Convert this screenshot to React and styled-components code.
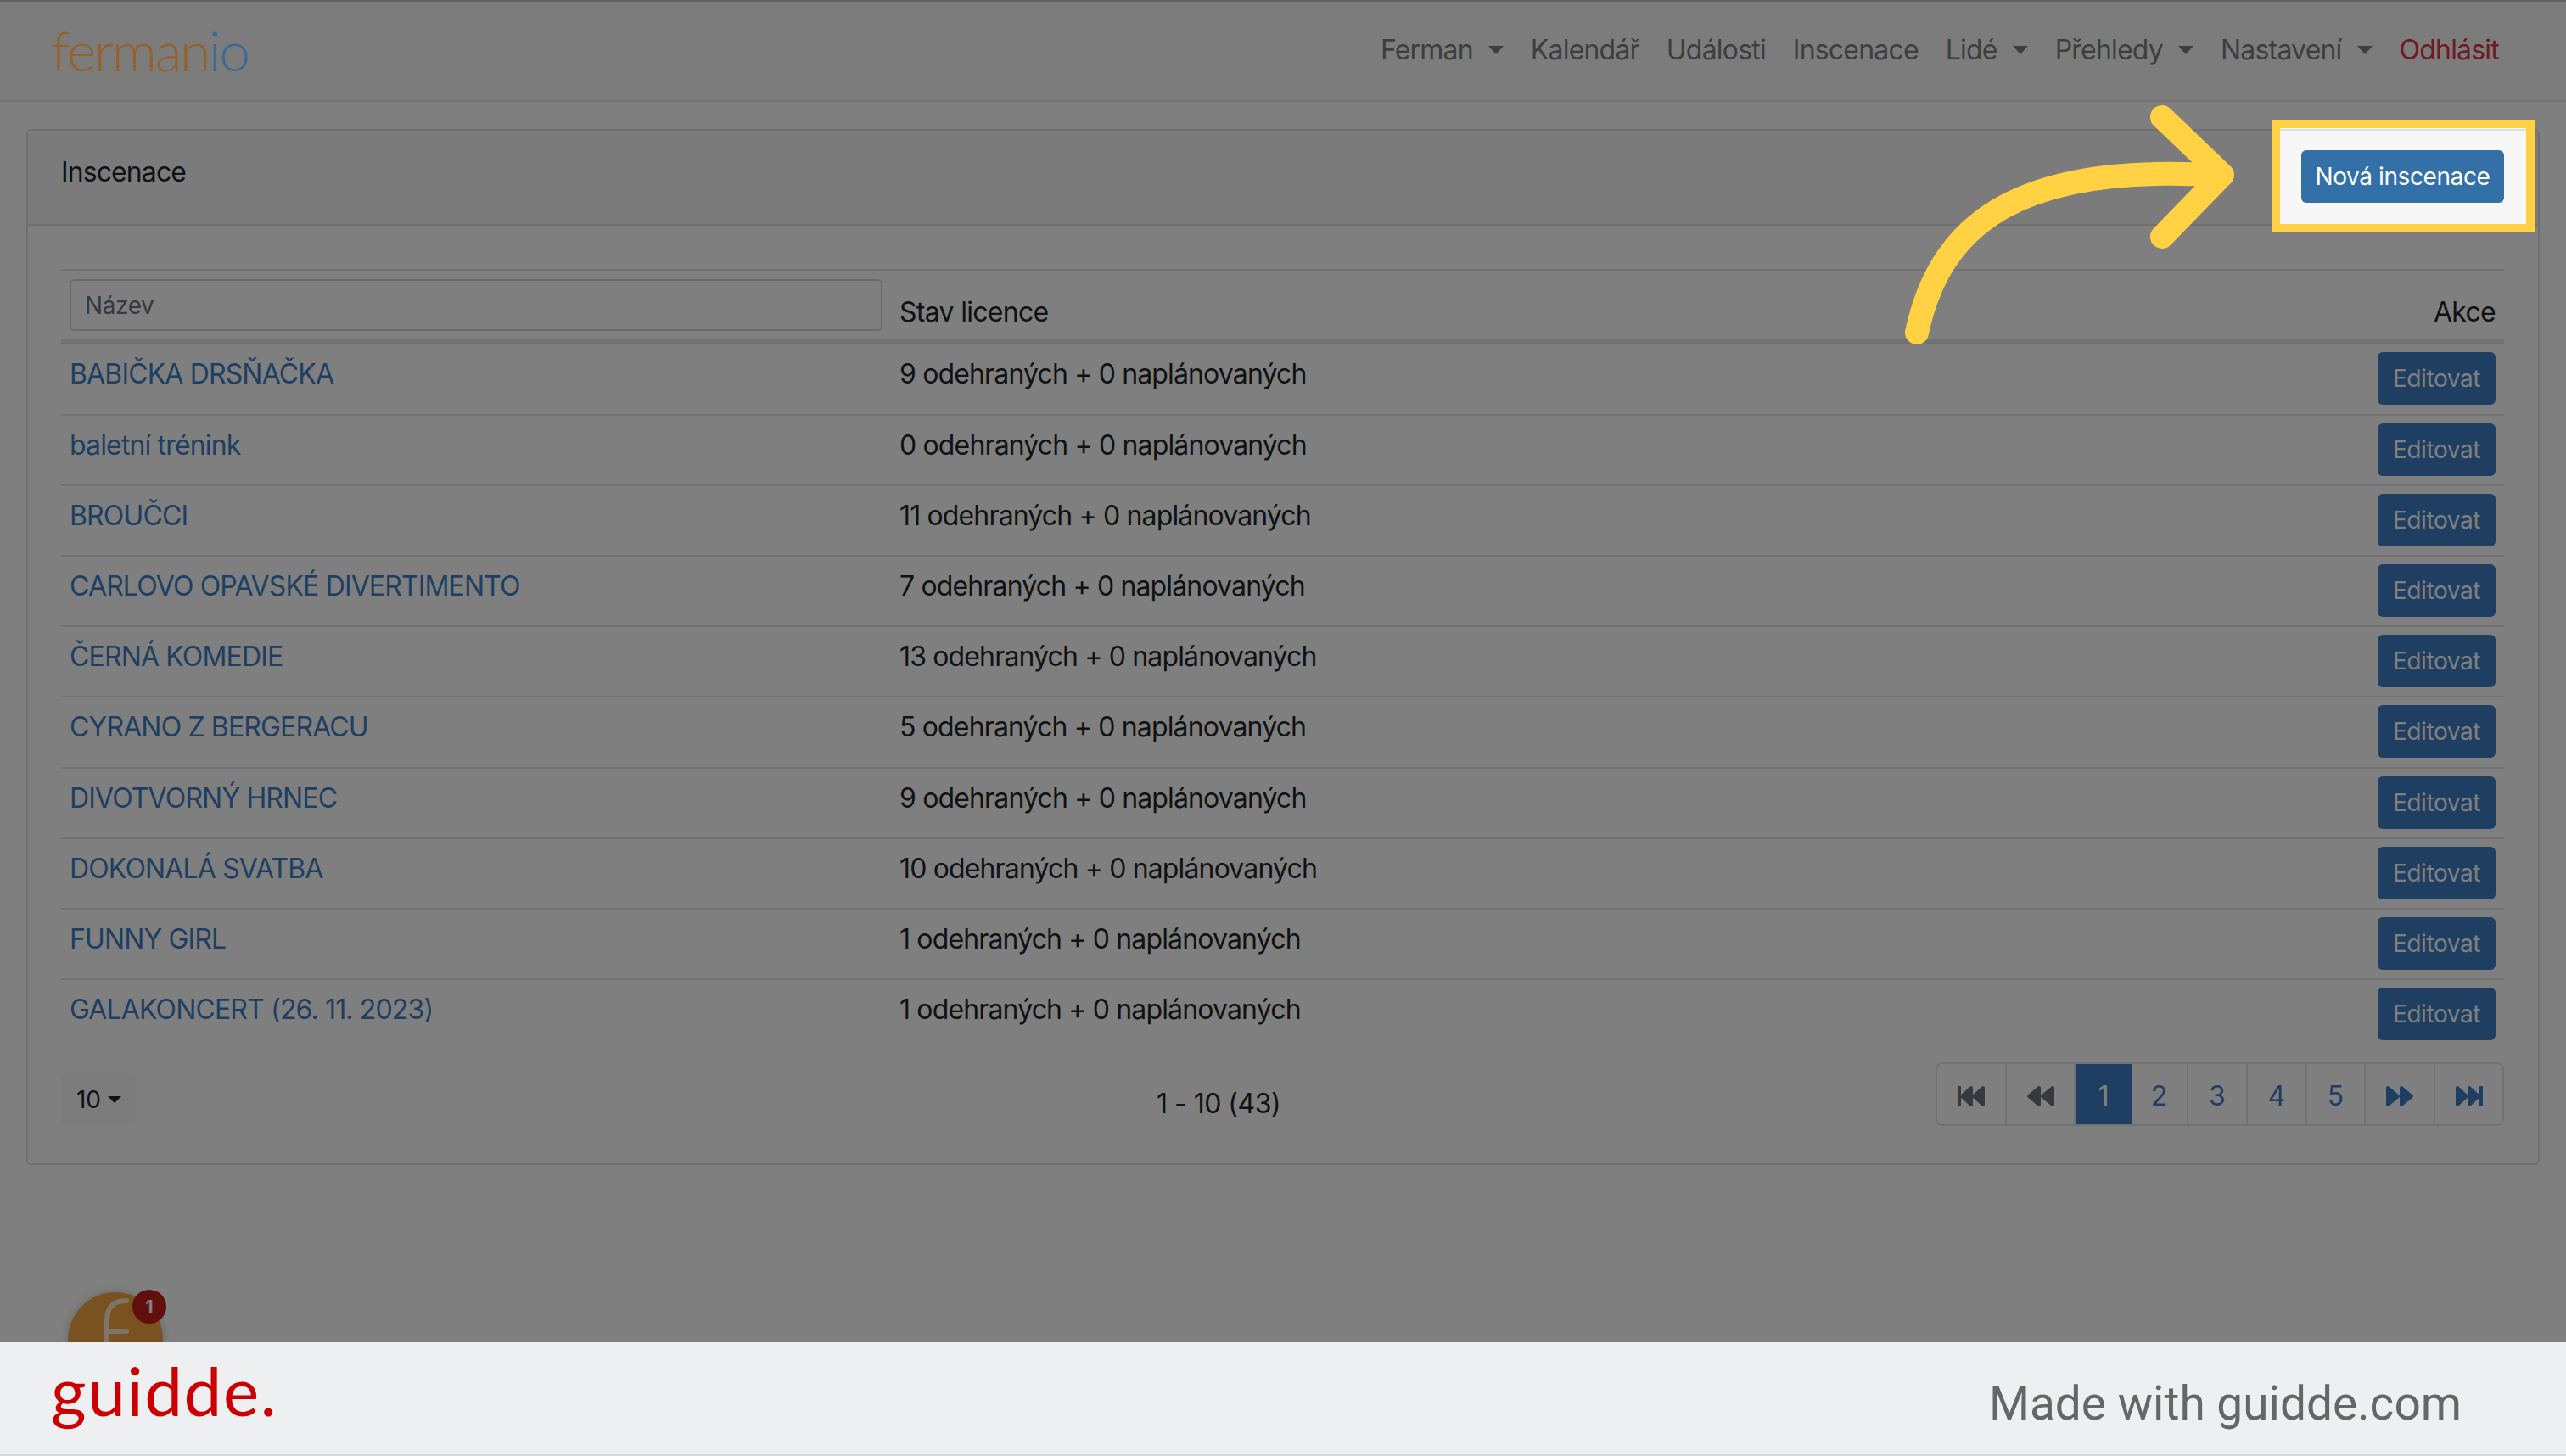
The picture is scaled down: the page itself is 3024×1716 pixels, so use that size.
import styled, { createGlobalStyle } from "styled-components";
import { FaFastBackward, FaBackward, FaForward, FaFastForward } from "react-icons/fa";

const GlobalStyle = createGlobalStyle`
  html, body {
    margin: 0;
    padding: 0;
    background: #fff;
  }
  body {
    font-family: Inter, "Liberation Sans", sans-serif;
    font-size: 32px;
    line-height: 48px;
    color: #212529;
  }
  * {
    box-sizing: border-box;
  }
`;

const blue = "#3e7ec4";

const Page = styled.div`
  width: 3024px;
  height: 1716px;
  display: flex;
  flex-direction: column;
  overflow: hidden;
`;

const Main = styled.main`
  position: relative;
  flex: 1;
  overflow: hidden;
`;

const Navbar = styled.nav`
  height: 120px;
  display: flex;
  align-items: center;
  justify-content: space-between;
  padding: 0 79px 2px 60px;
  background: #f8f9fa;
  border-top: 2px solid #c0c0c0;
  border-bottom: 2px solid #e7e7e7;
`;

// sits above the dimming layer so the thin strokes keep their colour
const Logo = styled.div`
  position: relative;
  z-index: 1;
  font-family: Lato, sans-serif;
  font-weight: 300;
  font-size: 66px;
  line-height: 72px;
  letter-spacing: -2.4px;
  color: #96612a;
  span {
    color: #3c6a96;
  }
`;

const NavLinks = styled.div`
  display: flex;
  gap: 32px;
`;

const NavLink = styled.a`
  display: flex;
  align-items: center;
  letter-spacing: -0.8px;
  color: ${(p) => (p.$danger ? "#dc3545" : "#7b7c7d")};
`;

const Caret = styled.i`
  display: inline-block;
  margin-left: 18px;
  border-top: 10px solid ${(p) => p.$color || "#7b7c7d"};
  border-left: 9px solid transparent;
  border-right: 9px solid transparent;
`;

const Content = styled.div`
  padding: 32px 31px 0;
`;

const Card = styled.section`
  border: 2px solid #dfdfdf;
  border-radius: 6px;
  height: 1221px;
`;

const CardHeader = styled.header`
  height: 112px;
  display: flex;
  align-items: flex-start;
  justify-content: space-between;
  padding: 23px 40px 0 39px;
  background: #f7f7f7;
  border-bottom: 2px solid #dfdfdf;
  border-radius: 4px 4px 0 0;
`;

const Title = styled.div`
  line-height: 52px;
  letter-spacing: -0.9px;
`;

const PrimaryButton = styled.button`
  height: 62px;
  width: 239px;
  padding: 0;
  border: 0;
  border-radius: 6px;
  background: #3470a8;
  color: #fff;
  font-family: inherit;
  font-size: 28px;
  letter-spacing: -0.4px;
`;

const CardBody = styled.div`
  padding: 51px 40px 0 39px;
`;

const Table = styled.table`
  width: 2879px;
  table-layout: fixed;
  border-collapse: separate;
  border-spacing: 0;
`;

const Th = styled.th`
  height: 89.4px;
  padding: 0 10px 8px;
  font-weight: 400;
  text-align: ${(p) => (p.$right ? "right" : "left")};
  vertical-align: bottom;
  letter-spacing: -0.7px;
  border-top: 2px solid #dee2e6;
  border-bottom: 6px solid #dee2e6;
`;

const Td = styled.td`
  height: 83.2px;
  padding: 9px 10px 0;
  vertical-align: top;
  line-height: 51px;
  letter-spacing: -0.85px;
  text-align: ${(p) => (p.$right ? "right" : "left")};
  border-bottom: ${(p) => (p.$last ? "0" : "2px solid #dee2e6")};
`;

const FilterInput = styled.input`
  display: block;
  width: 958px;
  height: 61px;
  margin-bottom: 2px;
  padding: 0 16px;
  border: 2px solid #ced4da;
  border-radius: 6px;
  background: #fff;
  font-family: inherit;
  font-size: 28px;
  letter-spacing: -0.4px;
  &::placeholder {
    color: #6c757d;
    opacity: 1;
  }
`;

const RowLink = styled.a`
  color: ${blue};
`;

const EditButton = styled.button`
  width: 139px;
  height: 62px;
  padding: 0;
  border: 0;
  border-radius: 6px;
  background: ${blue};
  color: #fff;
  font-family: inherit;
  font-size: 28px;
  letter-spacing: -0.4px;
  vertical-align: top;
`;

const TableFoot = styled.div`
  display: grid;
  grid-template-columns: 1217px 294px 1fr;
  align-items: center;
  margin-top: 14px;
`;

const PageSize = styled.button`
  display: flex;
  align-items: center;
  justify-content: center;
  gap: 8px;
  width: 89px;
  height: 62px;
  margin-top: 12px;
  border: 0;
  border-radius: 6px;
  background: #f8f9fa;
  color: #212529;
  font-family: inherit;
  font-size: 28px;
  padding: 0;
`;

const SmallCaret = styled(Caret)`
  margin: 0;
  border-top-width: 8px;
  border-left-width: 8px;
  border-right-width: 8px;
`;

const Count = styled.div`
  text-align: center;
  letter-spacing: -0.5px;
  padding-top: 22px;
`;

const Pagination = styled.div`
  display: flex;
  justify-self: end;
  height: 75px;
  border: 2px solid #dee2e6;
  border-radius: 8px;
  overflow: hidden;
`;

const PageItem = styled.a`
  display: flex;
  align-items: center;
  justify-content: center;
  width: ${(p) => p.$w}px;
  margin: ${(p) => (p.$active ? "-2px 0" : "0")};
  padding-top: 4px;
  background: ${(p) => (p.$active ? blue : "transparent")};
  color: ${(p) => (p.$active ? "#fff" : p.$muted ? "#6c757d" : blue)};
  border-right: ${(p) => (p.$active || p.$end ? "0" : "2px solid #dee2e6")};
`;

const ChatBubble = styled.div`
  position: absolute;
  left: 80px;
  top: 1523px;
  width: 112px;
  height: 112px;
  border-radius: 50%;
  background: #f4a444;
  box-shadow: 0 0 12px rgba(0, 0, 0, 0.2);
`;

const ChatBadge = styled.div`
  position: absolute;
  left: 76px;
  top: -3px;
  width: 40px;
  height: 40px;
  border-radius: 50%;
  background: #c01f18;
  color: #fff;
  font-size: 22px;
  font-weight: 700;
  line-height: 40px;
  text-align: center;
`;

// dims the whole page, only the hole over the button stays lit
const Spotlight = styled.div`
  position: absolute;
  left: 2677px;
  top: 141px;
  width: 310px;
  height: 133px;
  border: 10px solid #ffd143;
  box-shadow: 0 0 0 4000px rgba(0, 0, 0, 0.5);
`;

const Arrow = styled.svg`
  position: absolute;
  left: 2220px;
  top: 100px;
`;

const Footer = styled.footer`
  height: 134px;
  display: flex;
  align-items: center;
  justify-content: space-between;
  padding: 0 123px 0 60px;
  background: #eeeff1;
  border-bottom: 2px solid #dcdcdc;
`;

const Brand = styled.div`
  font-family: Lato, sans-serif;
  font-size: 80px;
  line-height: 100px;
  letter-spacing: 1.6px;
  color: #cc0000;
  padding-bottom: 20px;
`;

const MadeWith = styled.div`
  font-family: Roboto, sans-serif;
  font-size: 55px;
  line-height: 70px;
  color: #666;
  padding-top: 12px;
`;

const rows = [
  ["BABIČKA DRSŇAČKA", "9 odehraných + 0 naplánovaných"],
  ["baletní trénink", "0 odehraných + 0 naplánovaných"],
  ["BROUČCI", "11 odehraných + 0 naplánovaných"],
  ["CARLOVO OPAVSKÉ DIVERTIMENTO", "7 odehraných + 0 naplánovaných"],
  ["ČERNÁ KOMEDIE", "13 odehraných + 0 naplánovaných"],
  ["CYRANO Z BERGERACU", "5 odehraných + 0 naplánovaných"],
  ["DIVOTVORNÝ HRNEC", "9 odehraných + 0 naplánovaných"],
  ["DOKONALÁ SVATBA", "10 odehraných + 0 naplánovaných"],
  ["FUNNY GIRL", "1 odehraných + 0 naplánovaných"],
  ["GALAKONCERT (26. 11. 2023)", "1 odehraných + 0 naplánovaných"],
];

const navItems = [
  { label: "Ferman", caret: true },
  { label: "Kalendář" },
  { label: "Události" },
  { label: "Inscenace" },
  { label: "Lidé", caret: true },
  { label: "Přehledy", caret: true },
  { label: "Nastavení", caret: true },
  { label: "Odhlásit", danger: true },
];

function App() {
  return (
    <Page>
      <GlobalStyle />
      <Main>
        <Navbar>
          <Logo>
            ferman<span>io</span>
          </Logo>
          <NavLinks>
            {navItems.map((item) => (
              <NavLink key={item.label} $danger={item.danger}>
                {item.label}
                {item.caret && <Caret />}
              </NavLink>
            ))}
          </NavLinks>
        </Navbar>
        <Content>
          <Card>
            <CardHeader>
              <Title>Inscenace</Title>
              <PrimaryButton>Nová inscenace</PrimaryButton>
            </CardHeader>
            <CardBody>
              <Table>
                <colgroup>
                  <col width="978" />
                  <col />
                  <col width="300" />
                </colgroup>
                <thead>
                  <tr>
                    <Th>
                      <FilterInput placeholder="Název" />
                    </Th>
                    <Th>Stav licence</Th>
                    <Th $right>Akce</Th>
                  </tr>
                </thead>
                <tbody>
                  {rows.map(([name, state], i) => (
                    <tr key={name}>
                      <Td $last={i === rows.length - 1}>
                        <RowLink>{name}</RowLink>
                      </Td>
                      <Td $last={i === rows.length - 1}>{state}</Td>
                      <Td $right $last={i === rows.length - 1}>
                        <EditButton>Editovat</EditButton>
                      </Td>
                    </tr>
                  ))}
                </tbody>
              </Table>
              <TableFoot>
                <PageSize>
                  10 <SmallCaret $color="#212529" />
                </PageSize>
                <Count>1 - 10 (43)</Count>
                <Pagination>
                  <PageItem $w={82} $muted>
                    <FaFastBackward size={32} />
                  </PageItem>
                  <PageItem $w={81} $muted>
                    <FaBackward size={32} />
                  </PageItem>
                  <PageItem $w={66} $active>1</PageItem>
                  <PageItem $w={67}>2</PageItem>
                  <PageItem $w={70}>3</PageItem>
                  <PageItem $w={70}>4</PageItem>
                  <PageItem $w={69}>5</PageItem>
                  <PageItem $w={82}>
                    <FaForward size={32} />
                  </PageItem>
                  <PageItem $w={79} $end>
                    <FaFastForward size={32} />
                  </PageItem>
                </Pagination>
              </TableFoot>
            </CardBody>
          </Card>
        </Content>
        <ChatBubble>
          <svg width="112" height="112" viewBox="0 0 112 112" fill="none">
            <path
              d="M69 10 C53 10 46 18 46 34 L46 112 M46 46 L69 46"
              stroke="#fff"
              strokeWidth="6"
              strokeLinecap="round"
              opacity="0.75"
            />
          </svg>
          <ChatBadge>1</ChatBadge>
        </ChatBubble>
        <Spotlight />
        <Arrow width="420" height="310" viewBox="2220 100 420 310" fill="none">
          <path
            d="M2259 392 C2285 270 2370 190 2618 207"
            stroke="#ffd143"
            strokeWidth="28"
            strokeLinecap="round"
          />
          <path
            d="M2548 138 L2619 206 L2548 279"
            stroke="#ffd143"
            strokeWidth="28"
            strokeLinecap="round"
            strokeLinejoin="round"
          />
        </Arrow>
      </Main>
      <Footer>
        <Brand>guidde.</Brand>
        <MadeWith>Made with guidde.com</MadeWith>
      </Footer>
    </Page>
  );
}

export default App;
